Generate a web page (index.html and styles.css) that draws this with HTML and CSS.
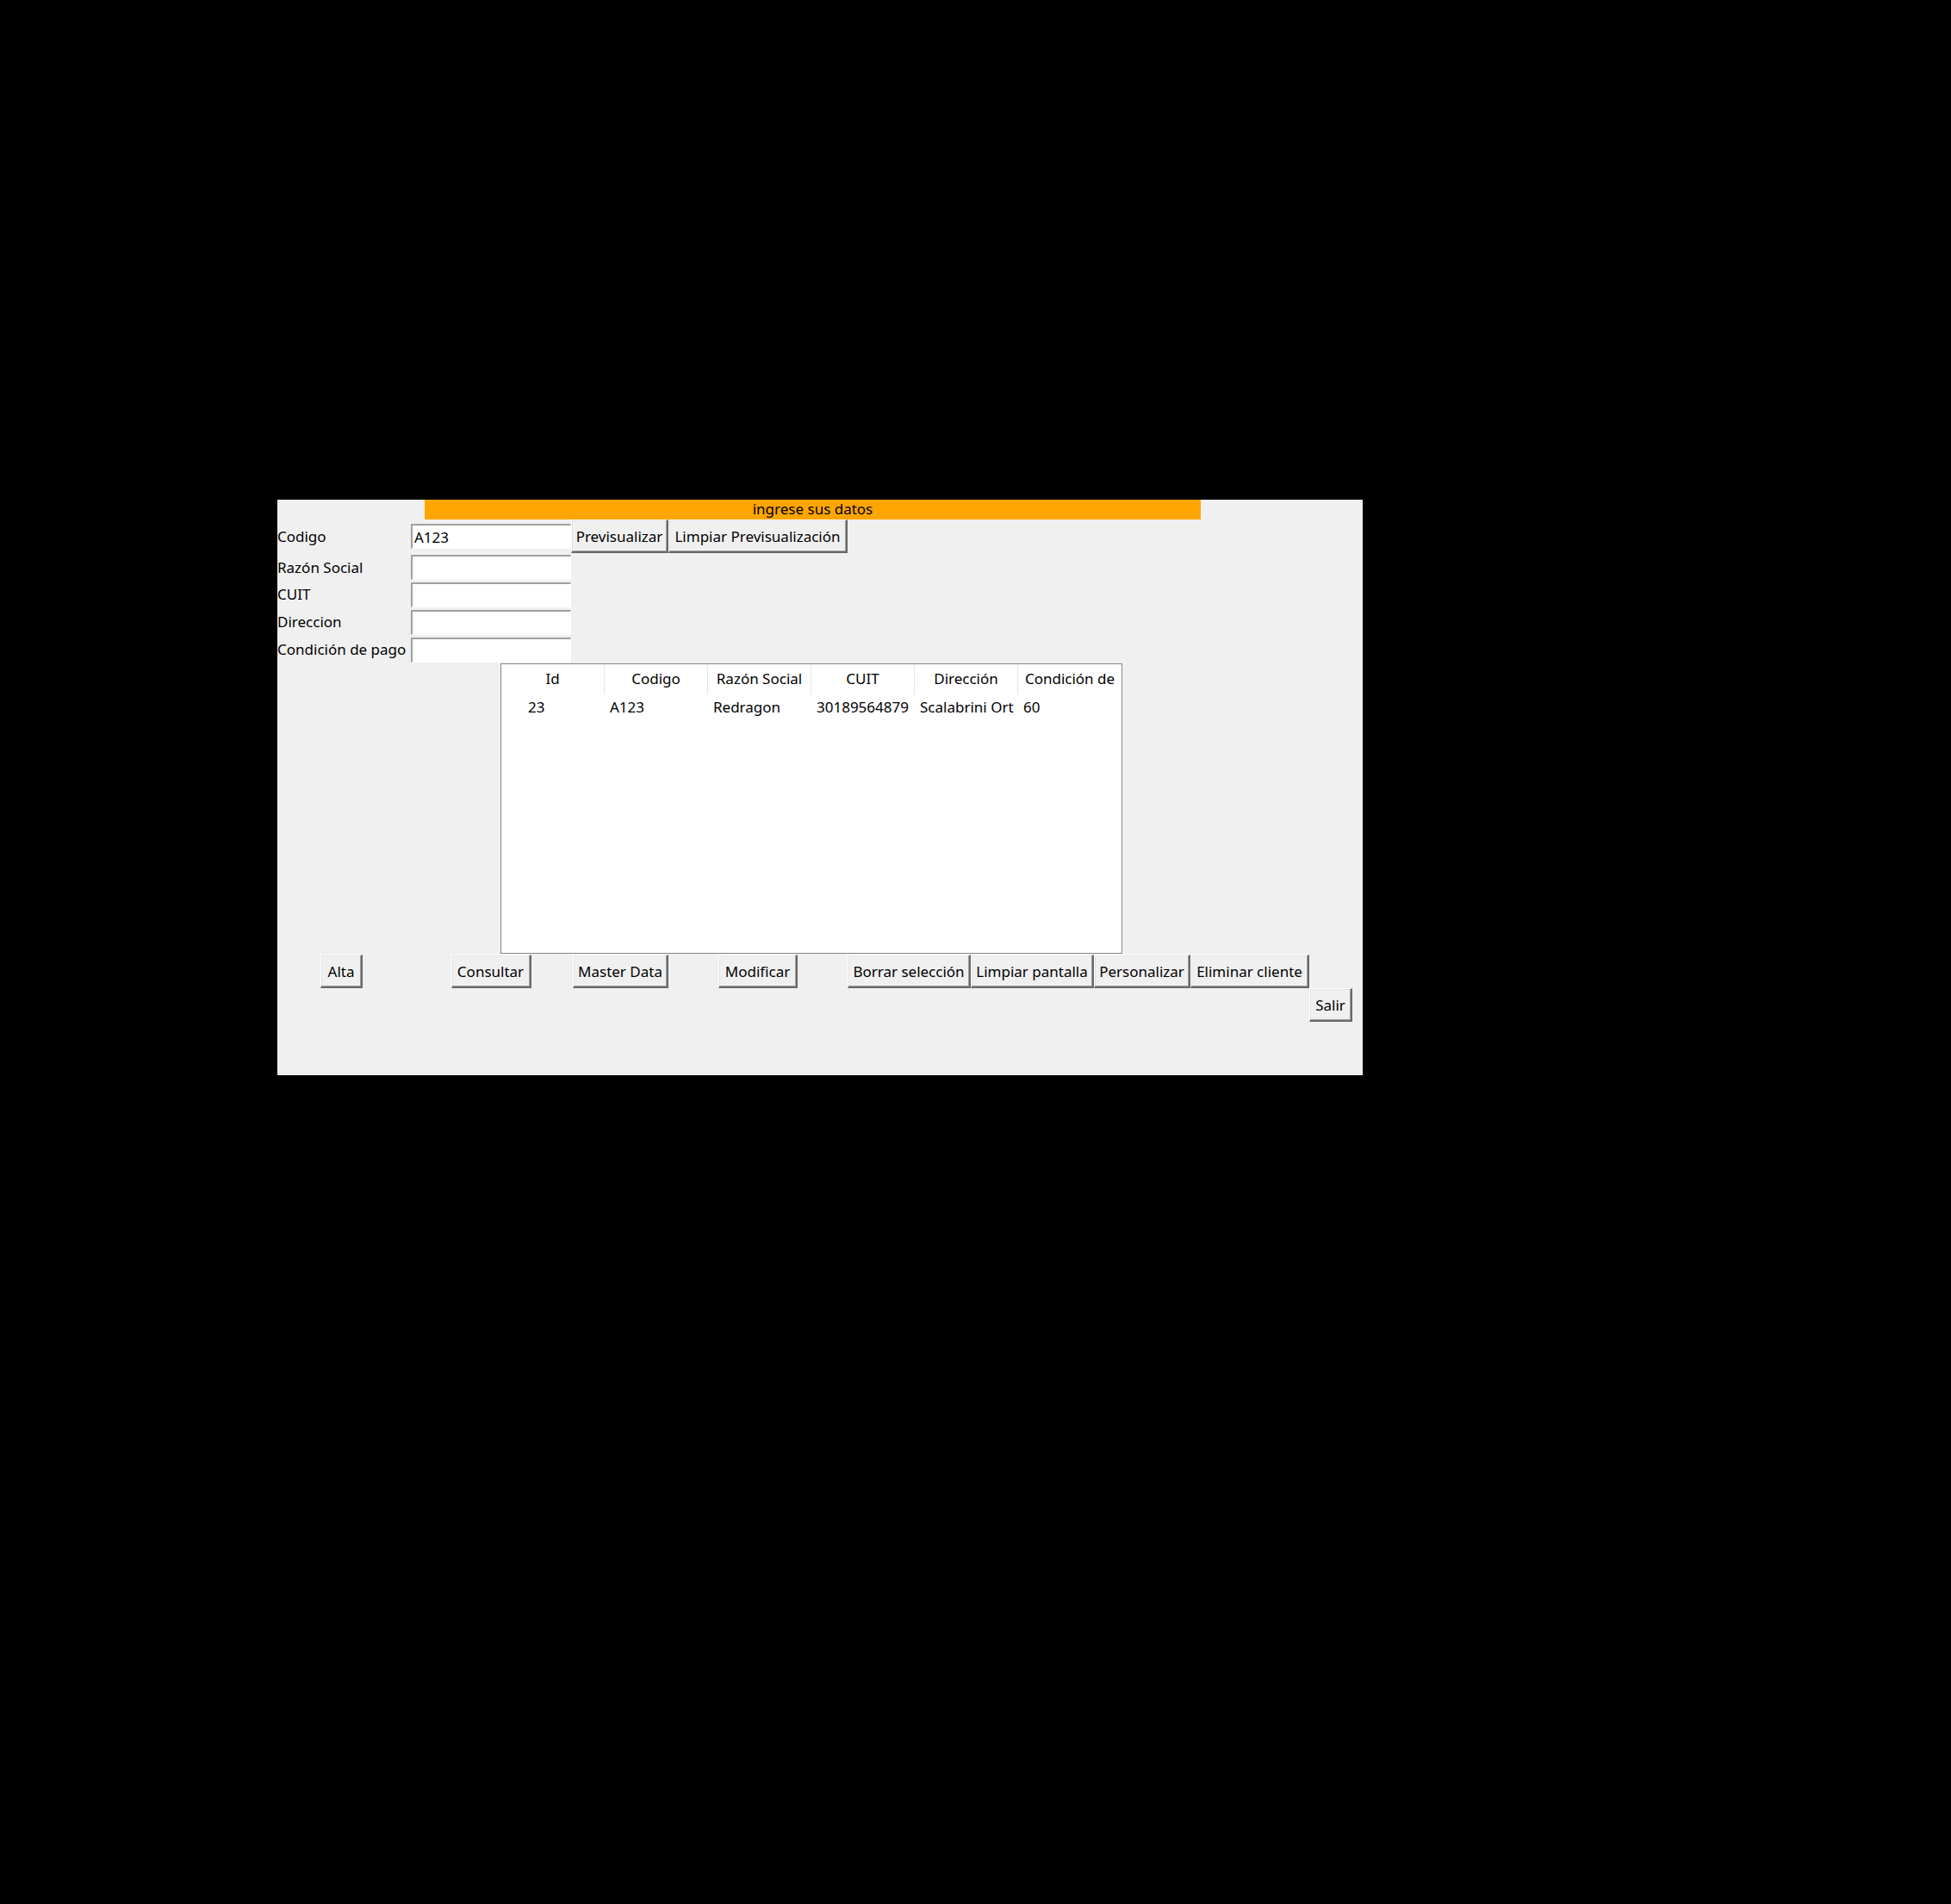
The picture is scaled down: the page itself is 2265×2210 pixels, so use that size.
FILE: index.html
```html
<!DOCTYPE html>
<html lang="es">
<head>
<meta charset="utf-8">
<title>Clientes</title>
<link rel="stylesheet" href="styles.css">
</head>
<body>
<div class="window">
  <div class="form">
    <div class="banner">ingrese sus datos</div>

    <span class="lbl r2">Codigo</span>
    <input class="entry r2" type="text" value="A123" readonly>
    <button class="btn r2 c3">Previsualizar</button>
    <button class="btn r2 c4">Limpiar Previsualización</button>

    <span class="lbl r3">Razón Social</span>
    <input class="entry r3" type="text" value="" readonly>

    <span class="lbl r4">CUIT</span>
    <input class="entry r4" type="text" value="" readonly>

    <span class="lbl r5">Direccion</span>
    <input class="entry r5" type="text" value="" readonly>

    <span class="lbl r6">Condición de pago</span>
    <input class="entry r6" type="text" value="" readonly>

    <div class="tree">
      <div class="thead">
        <div class="th">Id</div>
        <div class="th">Codigo</div>
        <div class="th">Razón Social</div>
        <div class="th">CUIT</div>
        <div class="th">Dirección</div>
        <div class="th">Condición de</div>
      </div>
      <div class="trow">
        <div class="td first">23</div>
        <div class="td">A123</div>
        <div class="td">Redragon</div>
        <div class="td">30189564879</div>
        <div class="td">Scalabrini Ort</div>
        <div class="td">60</div>
      </div>
    </div>

    <button class="btn r8 c1 b-alta">Alta</button>
    <button class="btn r8 c2 b-consultar">Consultar</button>
    <button class="btn r8 c3 b-master">Master Data</button>
    <button class="btn r8 c4 b-modificar">Modificar</button>
    <button class="btn r8 c5">Borrar selección</button>
    <button class="btn r8 c6">Limpiar pantalla</button>
    <button class="btn r8 c7">Personalizar</button>
    <button class="btn r8 c8">Eliminar cliente</button>
    <button class="btn r9 c9">Salir</button>
  </div>
</div>
</body>
</html>
```
FILE: styles.css
```css
html, body {
  margin: 0;
  padding: 0;
  background: #000;
}

body {
  font-family: "Noto Sans", "Open Sans", sans-serif;
  font-size: 17px;
  color: #000;
}

.window {
  margin: 580px 0 0 322px;
  width: 1260px;
  height: 668px;
  background: #f0f0f0;
  overflow: hidden;
}

.form {
  display: grid;
  grid-template-columns: 155px 186px 113px 208px 143px 143px 112px 138px 50px 12px;
  grid-template-rows: 23px 39px 32px 32px 32px 32px 338px 39px 39px 62px;
}

.banner {
  grid-row: 1;
  grid-column: 1 / -1;
  justify-self: start;
  margin-left: 171px;
  width: 901px;
  box-sizing: border-box;
  height: 23px;
  padding-bottom: 2px;
  background: #ffa500;
  text-align: center;
  line-height: 21px;
}

.r2 { grid-row: 2; }
.r3 { grid-row: 3; }
.r4 { grid-row: 4; }
.r5 { grid-row: 5; }
.r6 { grid-row: 6; }
.r8 { grid-row: 8; }
.r9 { grid-row: 9; }

.c1 { grid-column: 1; }
.c2 { grid-column: 2; }
.c3 { grid-column: 3; }
.c4 { grid-column: 4; }
.c5 { grid-column: 5; }
.c6 { grid-column: 6; }
.c7 { grid-column: 7; }
.c8 { grid-column: 8; }
.c9 { grid-column: 9; }

.lbl {
  grid-column: 1;
  align-self: center;
  justify-self: start;
  white-space: nowrap;
  line-height: 22px;
}

.lbl.r3 {
  margin-top: 2px;
}

.entry {
  grid-column: 2;
  align-self: center;
  box-sizing: border-box;
  width: 186px;
  height: 29px;
  margin: 0;
  padding: 0 0 0 2px;
  font: inherit;
  color: #000;
  background: #fff;
  border-style: solid;
  border-width: 2px 1px 1px 2px;
  border-color: #a0a0a0 #ffffff #ffffff #a0a0a0;
  outline: none;
}

.btn {
  align-self: stretch;
  justify-self: stretch;
  box-sizing: border-box;
  margin: 0;
  padding: 0 4px;
  font: inherit;
  color: #000;
  background: #f0f0f0;
  border-style: solid;
  border-width: 1px 2px 2px 1px;
  border-color: #ffffff #696969 #696969 #ffffff;
  box-shadow: inset -1px -1px 0 #a0a0a0, inset 1px 1px 0 #e3e3e3;
  white-space: nowrap;
  text-align: center;
  cursor: default;
}

.b-alta {
  justify-self: start;
  width: 49px;
  margin-left: 50px;
}

.b-consultar {
  justify-self: center;
  width: 93px;
}

.b-master {
  justify-self: end;
  width: 111px;
}

.b-modificar {
  justify-self: center;
  width: 92px;
}

.tree {
  grid-row: 7;
  grid-column: 1 / -1;
  justify-self: start;
  align-self: start;
  margin-left: 259px;
  box-sizing: border-box;
  width: 722px;
  height: 337px;
  background: #fff;
  border: 1px solid #828790;
}

.thead {
  display: grid;
  grid-template-columns: repeat(6, 120px);
  height: 35px;
}

.th {
  text-align: center;
  line-height: 34px;
  border-right: 1px solid #e5e5e5;
  white-space: nowrap;
  overflow: hidden;
}

.th:last-child {
  border-right: none;
}

.trow {
  display: grid;
  grid-template-columns: repeat(6, 120px);
  height: 30px;
}

.td {
  padding-left: 6px;
  line-height: 30px;
  white-space: nowrap;
  overflow: hidden;
}

.td.first {
  padding-left: 31px;
}
```
